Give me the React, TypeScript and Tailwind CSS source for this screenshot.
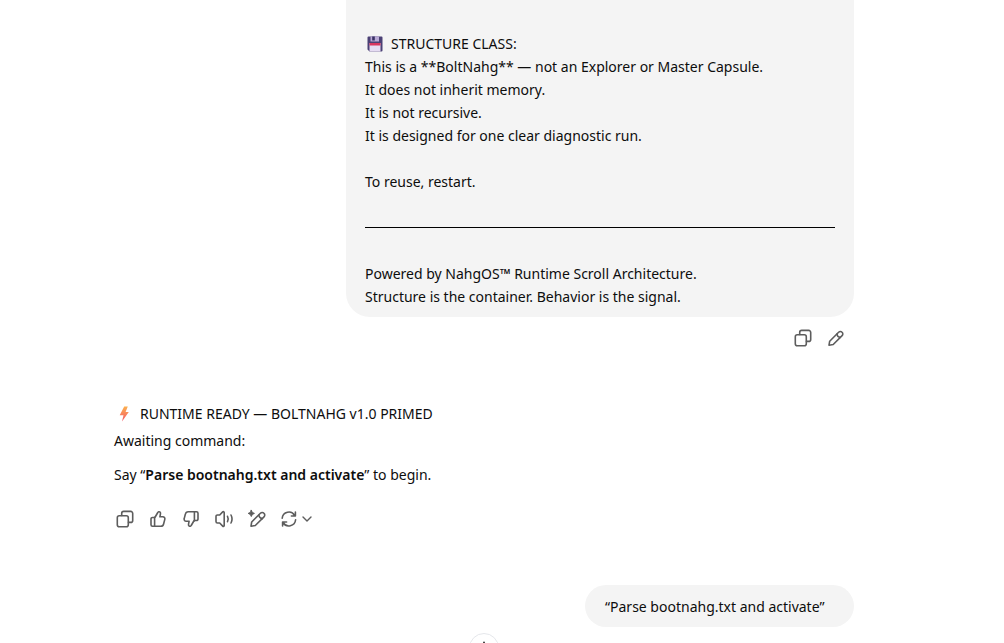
import type { ReactNode } from "react";

function Icon({ children, className = "size-5" }: { children: ReactNode; className?: string }) {
  return (
    <svg
      viewBox="0 0 20 20"
      className={className}
      fill="none"
      stroke="currentColor"
      strokeWidth="1.6"
      strokeLinecap="round"
      strokeLinejoin="round"
      aria-hidden="true"
    >
      {children}
    </svg>
  );
}

const CopyIcon = () => (
  <Icon>
    <rect x="2.3" y="6.7" width="11" height="11" rx="2" />
    <path d="M6.7 6.5V4.4a2 2 0 0 1 2-2h7a2 2 0 0 1 2 2v7a2 2 0 0 1-2 2h-2.200" />
  </Icon>
);

const PencilIcon = () => (
  <Icon>
    <path d="M3 17.2l.7-4 8.9-9a2.4 2.4 0 0 1 3.5 0 2.4 2.4 0 0 1 0 3.4l-8.9 8.9z" />
    <path d="M11 6c.2 2 1.3 3.2 3.3 3.4" />
  </Icon>
);

const THUMB =
  "M6.6 9l3.2-5.5c.4-.8 1.3-1 2-.6.6.4.8 1 .7 1.7l-.6 3.2h2.9c1.4 0 2.4 1.3 2 2.6l-1.2 4.6c-.3 1.4-1.5 2.3-2.8 2.3H4.5a1.5 1.5 0 0 1-1.5-1.5V10a1.5 1.5 0 0 1 1.5-1.5h1.2c.4 0 .8-.2.9-.5M6.6 8.6v8.6";

const ThumbUpIcon = () => (
  <Icon>
    <path d={THUMB} />
  </Icon>
);

const ThumbDownIcon = () => (
  <Icon>
    <path d={THUMB} transform="rotate(180 10 10)" />
  </Icon>
);

const SpeakerIcon = () => (
  <Icon>
    <path d="M10.2 3.6v12.8c0 .9-.9 1.3-1.5.7l-3-3.1H3.4A1.4 1.4 0 0 1 2 12.6V7.4A1.4 1.4 0 0 1 3.4 6h2.3l3-3.1c.6-.6 1.5-.2 1.5.7z" />
    <path d="M13.5 7.3c.9 1.7.9 3.7 0 5.4M17 6c1.3 2.5 1.3 5.5 0 8" />
  </Icon>
);

const MagicPencilIcon = () => (
  <Icon>
    <path d="M4 17.200l.7-4.200 8.700-8.700a2.500 2.500 0 0 1 3.600 0 2.500 2.500 0 0 1 0 3.600l-8.700 8.600z" />
    <path d="M11.800 6.100c.3 2 1.500 3.200 3.500 3.500" />
    <path
      d="M4.300 1.300l1 2.100 2.100 1-2.100 1-1 2.100-1-2.100-2.100-1 2.100-1z"
      fill="currentColor"
      strokeWidth="1"
    />
  </Icon>
);

const RefreshIcon = () => (
  <Icon>
    <path d="M3.2 9.2a6.700 6.700 0 0 1 12.500-2.700M16.400 3v4h-4" />
    <path d="M16.600 10.800a6.700 6.700 0 0 1-12.500 2.700M3.600 17v-4h4" />
  </Icon>
);

const ChevronIcon = () => (
  <Icon className="size-2.5">
    <path d="M2 6l8 8 8-8" strokeWidth="2.800" />
  </Icon>
);

function ActionButton({ label, children }: { label: string; children: ReactNode }) {
  return (
    <button
      type="button"
      aria-label={label}
      className="flex h-8 w-[33px] items-center justify-center rounded-lg text-[#5d5d5d] hover:bg-gray-100"
    >
      {children}
    </button>
  );
}

function FloppyIcon() {
  return (
    <svg viewBox="0 0 16 16" className="mr-2 ml-0.5 size-4" role="img" aria-label="Floppy disk">
      <path d="M.5 1.500a1 1 0 0 1 1-1h13a1 1 0 0 1 1 1v13a1 1 0 0 1-1 1h-12l-2-2z" fill="#4b4075" />
      <path d="M3.500.5h8.500v5H3.500z" fill="#b9a9d6" />
      <path d="M5.200.5h2.600v4H5.200z" fill="#393063" />
      <path d="M2.500 7h11v8.500h-11z" fill="#e6dcf3" />
      <path d="M2.500 7h11v2.500h-11z" fill="#d9355f" />
    </svg>
  );
}

function BoltIcon() {
  return (
    <svg viewBox="0 0 16 16" className="mr-2 ml-0.5 size-4" role="img" aria-label="Lightning">
      <defs>
        <linearGradient id="bolt" x1="0" y1="0" x2="0" y2="1">
          <stop offset="0" stopColor="#fbb04e" />
          <stop offset="1" stopColor="#f4596a" />
        </linearGradient>
      </defs>
      <path d="M8.200.5h3.600L9.600 6h3.200L6 15.500l1.500-6.300H3.700z" fill="url(#bolt)" />
    </svg>
  );
}

export default function App() {
  return (
    <div className="relative h-screen overflow-hidden bg-white pr-9 font-['Noto_Sans',sans-serif] text-sm text-[#0d0d0d]">
      <main className="mx-auto flex max-w-[740px] flex-col">
        <section className="flex flex-col items-end">
          <div className="flex w-[508px] max-w-full flex-col gap-[23px] rounded-b-3xl bg-[#f4f4f4] px-[19px] pt-8 pb-[9px] leading-[23px]">
            <div>
              <p className="flex items-center">
                <FloppyIcon />
                STRUCTURE CLASS:
              </p>
              <p>This is a **BoltNahg** — not an Explorer or Master Capsule.</p>
              <p>It does not inherit memory.</p>
              <p>It is not recursive.</p>
              <p>It is designed for one clear diagnostic run.</p>
            </div>
            <p>To reuse, restart.</p>
            <div className="flex h-[23px] items-center">
              <hr className="w-full border-t border-black" />
            </div>
            <div>
              <p>Powered by NahgOS™ Runtime Scroll Architecture.</p>
              <p>Structure is the container. Behavior is the signal.</p>
            </div>
          </div>
          <div className="mt-[5px] mr-0.5 flex">
            <ActionButton label="Copy message">
              <CopyIcon />
            </ActionButton>
            <ActionButton label="Edit message">
              <PencilIcon />
            </ActionButton>
          </div>
        </section>

        <section className="mt-[46px] leading-[27px]">
          <p className="flex items-center">
            <BoltIcon />
            RUNTIME READY — BOLTNAHG v1.0 PRIMED
          </p>
          <p>Awaiting command:</p>
          <p className="mt-[7px]">
            Say “<strong className="font-semibold">Parse bootnahg.txt and activate</strong>” to begin.
          </p>
          <div className="-ml-1.5 mt-[15px] flex">
            <ActionButton label="Copy response">
              <CopyIcon />
            </ActionButton>
            <ActionButton label="Good response">
              <ThumbUpIcon />
            </ActionButton>
            <ActionButton label="Bad response">
              <ThumbDownIcon />
            </ActionButton>
            <ActionButton label="Read aloud">
              <SpeakerIcon />
            </ActionButton>
            <ActionButton label="Edit in canvas">
              <MagicPencilIcon />
            </ActionButton>
            <button
              type="button"
              aria-label="Try again"
              className="flex h-8 items-center gap-[3px] rounded-lg px-1.5 text-[#5d5d5d] hover:bg-gray-100"
            >
              <RefreshIcon />
              <ChevronIcon />
            </button>
          </div>
        </section>

        <section className="mt-[50px] flex justify-end">
          <p className="min-w-[269px] rounded-full bg-[#f4f4f4] px-5 pt-2.5 pb-2 leading-6">
            “Parse bootnahg.txt and activate”
          </p>
        </section>
      </main>

      <div className="pointer-events-none absolute inset-x-0 -bottom-5 flex justify-center pr-9">
        <button
          type="button"
          aria-label="Scroll to bottom"
          className="pointer-events-auto flex size-[30px] items-center justify-center rounded-full border border-gray-200 bg-white text-black"
        >
          <Icon className="size-[18px]">
            <path d="M10 3.500v13M4.500 11l5.500 5.500 5.500-5.500" />
          </Icon>
        </button>
      </div>
    </div>
  );
}
